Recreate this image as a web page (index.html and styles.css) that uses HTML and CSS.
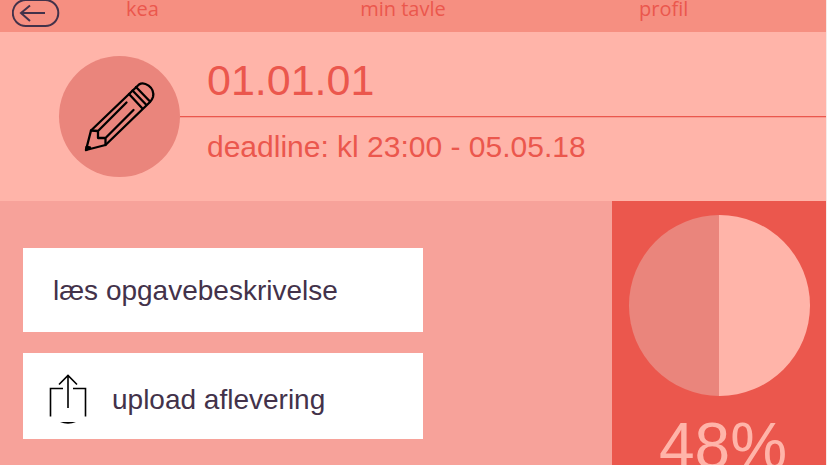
FILE: index.html
```html
<!DOCTYPE html>
<html lang="da">
<head>
<meta charset="utf-8">
<meta name="viewport" content="width=device-width, initial-scale=1">
<title>01.01.01</title>
<link rel="stylesheet" href="styles.css">
</head>
<body>
<header class="topbar">
  <button class="back" type="button" aria-label="tilbage">
    <svg width="48" height="28" viewBox="0 0 48 28" fill="none" stroke="#43324a" stroke-width="2">
      <rect x="0.800" y="0" width="45.500" height="26" rx="13"/>
      <path d="M33 13H9M18 5.500L9 13l9 8"/>
    </svg>
  </button>
  <nav class="nav">
    <a href="#kea">kea</a>
    <a href="#tavle">min tavle</a>
    <a href="#profil">profil</a>
  </nav>
</header>
<section class="hero">
  <div class="badge">
    <svg width="121" height="121" viewBox="0 0 121 121" fill="none" stroke="#000" stroke-width="2.300" stroke-linejoin="round" stroke-linecap="round">
      <path d="M27 94L32 74.500 80 28.500C85 25 96 31 94 41Q93 44 91 46L46.500 89Z"/>
      <path d="M32 74.500L39 75V82L46.500 82V89M39 75L67.500 46.500M46.500 82L74.500 54"/>
      <path d="M70 38L83 52M73.500 34.500L87 48.500M77 31L91 45.500"/>
      <path d="M27.500 91L31 91.500 27 94Z" fill="#000"/>
    </svg>
  </div>
  <div class="info">
    <h1>01.01.01</h1>
    <p>deadline: kl 23:00 - 05.05.18</p>
  </div>
</section>
<main class="content">
  <div class="actions">
    <button class="action" type="button">læs opgavebeskrivelse</button>
    <button class="action upload" type="button">
      <svg width="38" height="50" viewBox="0 0 38 50" fill="none" stroke="#000" stroke-width="1.600">
        <path d="M14 14.500H1.500V42.500M24 14.500H36.500V42.500M19 34V2M10 10.500L19 1.500l9 9"/>
        <path d="M11 48H27Q19 51.500 11 48Z" fill="#000" stroke="none"/>
      </svg>
      <span>upload aflevering</span>
    </button>
  </div>
  <aside class="progress">
    <div class="pie"></div>
    <p>48%</p>
  </aside>
</main>
</body>
</html>
```
FILE: styles.css
```css
* {
  box-sizing: border-box;
}

body {
  margin: 0;
  height: 100vh;
  overflow: hidden;
  display: flex;
  flex-direction: column;
  border-right: 1px solid #f6e9e7;
  background: #f7a29a;
  color: #43324a;
  font-family: "Liberation Sans", Arial, sans-serif;
}

h1,
p {
  margin: 0;
  font-weight: 400;
}

button {
  border: 0;
  font: inherit;
  color: inherit;
  cursor: pointer;
}

svg {
  display: block;
  flex: none;
}

.topbar {
  flex: none;
  display: flex;
  height: 32px;
  padding-left: 12px;
  background: #f68f81;
}

.back {
  align-self: flex-start;
  z-index: 1;
  padding: 0;
  background: none;
}

.nav {
  flex: 1;
  display: grid;
  grid-template-columns: repeat(3, 1fr);
  margin-left: -48px;
  padding-right: 32px;
  font: 20px/18px "Open Sans", "Noto Sans", sans-serif;
  text-align: center;
}

.nav a {
  color: #eb574d;
  text-decoration: none;
}

.hero {
  flex: none;
  display: flex;
  align-items: center;
  height: 169px;
  padding-left: 59px;
  background: #ffb4a9;
  color: #eb574d;
}

.badge {
  flex: none;
  border-radius: 50%;
  background: #ea857c;
}

.info {
  flex: 1;
}

.info h1 {
  padding: 0 0 7px 27px;
  border-bottom: 1px solid #eb574d;
  box-shadow: 0 1px #f79a90;
  font-size: 43px;
  line-height: 57px;
}

.info p {
  padding: 8px 0 12px 27px;
  font-size: 30px;
  line-height: 44px;
}

.content {
  flex: 1;
  display: grid;
  grid-template-columns: 1fr 214px;
}

.actions {
  display: flex;
  flex-direction: column;
  gap: 21px;
  padding: 47px 18px 24px 23px;
}

.action {
  display: flex;
  align-items: center;
  width: 70%;
  min-height: 84px;
  padding: 2px 30px 0;
  background: #fff;
  font-size: 28px;
}

.upload {
  gap: 25px;
  min-height: 86px;
  padding: 6px 26px 0;
}

.upload span {
  padding-top: 2px;
}

.progress {
  display: flex;
  flex-direction: column;
  align-items: center;
  gap: 14px;
  padding-top: 14px;
  background: #eb574d;
  color: #ffb4a9;
  font-size: 64px;
  line-height: 72px;
}

.progress p {
  padding-left: 8px;
}

.pie {
  width: 181px;
  height: 181px;
  border-radius: 50%;
  background: linear-gradient(90deg, #ea857c 50%, #ffb4a9 50%);
}
```
